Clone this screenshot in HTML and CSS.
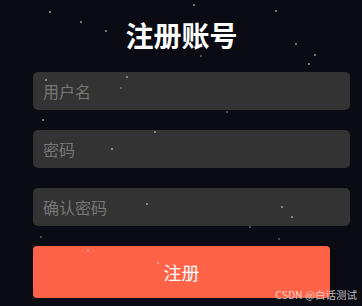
FILE: index.html
```html
<!DOCTYPE html>
<html lang="zh">
<head>
  <meta charset="UTF-8">
  <meta name="viewport" content="width=device-width, initial-scale=1.0">
  <title>注册账号</title>
  <link rel="stylesheet" href="styles.css">
</head>
<body>
  <div class="form">
    <h2 class="title">注册账号</h2>
    <input type="text" placeholder="用户名">
    <input type="password" placeholder="密码">
    <input type="password" placeholder="确认密码">
    <button>注册</button>
  </div>

  <div class="stars">
    <span class="star" style="left:49px;top:11px"></span>
    <span class="star" style="left:80px;top:21px"></span>
    <span class="star" style="left:105px;top:30px"></span>
    <span class="star" style="left:193px;top:4px"></span>
    <span class="star" style="left:275px;top:10px"></span>
    <span class="star" style="left:295px;top:43px"></span>
    <span class="star" style="left:314px;top:54px"></span>
    <span class="star dim" style="left:200px;top:55px"></span>
    <span class="star" style="left:126px;top:76px"></span>
    <span class="star" style="left:45px;top:79px"></span>
    <span class="star dim" style="left:120px;top:87px"></span>
    <span class="star dim" style="left:226px;top:111px"></span>
    <span class="star" style="left:308px;top:63px"></span>
    <span class="star" style="left:42px;top:119px"></span>
    <span class="star" style="left:154px;top:131px"></span>
    <span class="star" style="left:111px;top:148px"></span>
    <span class="star" style="left:146px;top:203px"></span>
    <span class="star" style="left:281px;top:206px"></span>
    <span class="star" style="left:291px;top:216px"></span>
    <span class="star dim" style="left:249px;top:226px"></span>
    <span class="star dim" style="left:40px;top:236px"></span>
    <span class="star dim" style="left:278px;top:238px"></span>
    <span class="star" style="left:87px;top:250px"></span>
    <span class="star" style="left:157px;top:262px"></span>
  </div>

  <div class="watermark">CSDN @白话测试</div>
</body>
</html>
```

FILE: styles.css
```css
body {
  margin: 0;
  height: 306px;
  overflow: hidden;
  background-color: #0a0b13;
  font-family: "Noto Sans CJK SC", "Noto Sans", sans-serif;
}
.form {
  width: 297px;
  margin-left: 33px;
  padding-top: 15px;
}
.title {
  margin: 0 0 17px 0;
  height: 40px;
  line-height: 40px;
  text-align: center;
  color: #fff;
  font-size: 28px;
  font-weight: bold;
}
input, button {
  display: block;
  height: 38px;
  margin: 0 0 20px 0;
  border: none;
  border-radius: 5px;
  font-family: inherit;
  font-size: 16px;
}
input {
  width: 297px;
  padding: 0 10px;
  background: #333;
  color: #ddd;
  outline: none;
}
input::placeholder {
  color: #777;
}
button {
  width: 297px;
  height: 52px;
  background: #ff6347;
  color: #fff;
  font-size: 18px;
  border-radius: 4px;
  cursor: pointer;
}
.stars {
  position: absolute;
  left: 0;
  top: 0;
  width: 362px;
  height: 306px;
  pointer-events: none;
}
.star {
  position: absolute;
  width: 2px;
  height: 2px;
  border-radius: 50%;
  background: rgba(200, 200, 200, 0.75);
}
.star.dim {
  background: rgba(150, 150, 150, 0.6);
}
.watermark {
  position: absolute;
  right: 5px;
  bottom: 4px;
  font-size: 10.5px;
  color: rgba(255, 255, 255, 0.72);
}
```
